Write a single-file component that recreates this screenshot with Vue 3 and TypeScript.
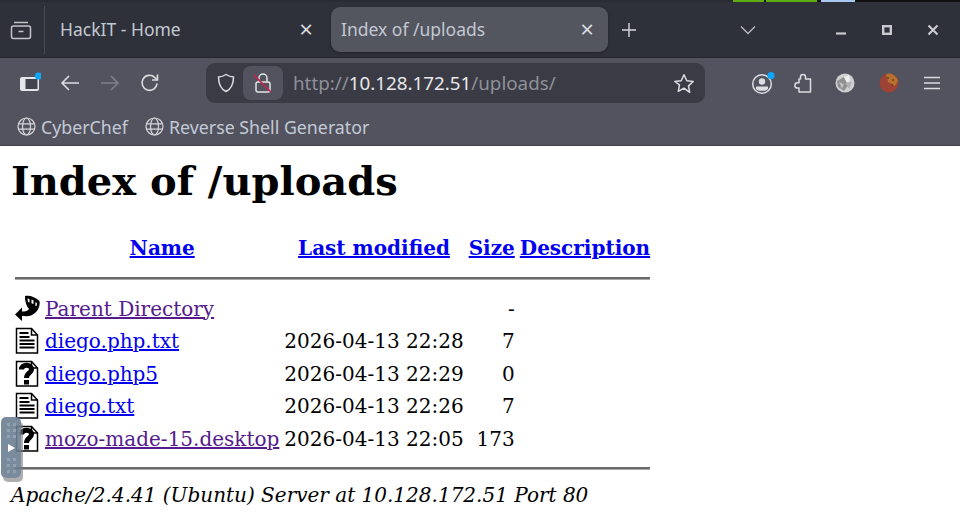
<script setup lang="ts">
interface Row { icon: string; name: string; visited?: boolean; date: string; size: string }
const rows: Row[] = [
  { icon: 'back', name: 'Parent Directory', visited: true, date: '', size: '-' },
  { icon: 'text', name: 'diego.php.txt', date: '2026-04-13 22:28', size: '7' },
  { icon: 'unknown', name: 'diego.php5', date: '2026-04-13 22:29', size: '0' },
  { icon: 'text', name: 'diego.txt', date: '2026-04-13 22:26', size: '7' },
  { icon: 'unknown', name: 'mozo-made-15.desktop', visited: true, date: '2026-04-13 22:05', size: '173' },
]
const strip = [
  { w: 31, c: '#5fae10' }, { w: 2, c: '#111' }, { w: 51, c: '#5fae10' }, { w: 4, c: '#111' },
  { w: 34, c: '#a9c8ef' }, { w: 40, c: '#111' },
]
</script>

<template>
  <div class="app">
    <div class="strip">
      <div class="strip-fill"></div>
      <span v-for="(s, i) in strip" :key="i" :style="{ width: s.w + 'px', background: s.c }"></span>
      <div class="strip-end"></div>
    </div>
    <div class="tabbar">
      <div class="tabview">
        <svg width="22" height="22" viewBox="0 0 22 22" fill="none" stroke="#c3c4ca" stroke-width="1.5">
          <rect x="1.5" y="7" width="19" height="12.5" rx="2"/>
          <path d="M4 3.500h14"/>
          <path d="M8.500 12.500h5"/>
        </svg>
      </div>
      <div class="tab inactive">
        <span class="tab-title">HackIT - Home</span>
        <span class="tab-close">×</span>
      </div>
      <div class="tab active">
        <span class="tab-title">Index of /uploads</span>
        <span class="tab-close">×</span>
      </div>
      <svg class="newtab" width="16" height="16" viewBox="0 0 16 16" stroke="#d6d7db" stroke-width="1.4"><path d="M8 1v14M1 8h14"/></svg>
      <svg class="tablist" width="16" height="10" viewBox="0 0 16 10" fill="none" stroke="#b5b6bd" stroke-width="1.4"><path d="M1 1.500l7 7 7-7"/></svg>
      <div class="winctl">
        <svg width="12" height="12" viewBox="0 0 12 12" stroke="#c9cacf" stroke-width="2.2"><path d="M1 9.500h10"/></svg>
        <svg width="12" height="12" viewBox="0 0 12 12" fill="none" stroke="#c9cacf" stroke-width="2.4"><rect x="2.2" y="2.2" width="7.6" height="7.6"/></svg>
        <svg width="12" height="12" viewBox="0 0 12 12" stroke="#c9cacf" stroke-width="2.2"><path d="M1.500 1.500l9 9M10.500 1.500l-9 9"/></svg>
      </div>
    </div>

    <div class="toolbar">
      <div class="sidebar-btn">
        <svg width="22" height="22" viewBox="0 0 22 22">
          <rect x="1" y="5" width="19" height="14" rx="2" fill="#e4e5e8"/>
          <rect x="6.500" y="7" width="12" height="10" rx=".5" fill="#42434d"/>
          <circle cx="19.500" cy="4" r="3.600" fill="#0ea5ff"/>
        </svg>
      </div>
      <svg class="nav" width="20" height="20" viewBox="0 0 20 20" fill="none" stroke="#dcdde0" stroke-width="1.6"><path d="M19 10H2M9 3l-7 7 7 7"/></svg>
      <svg class="nav" width="20" height="20" viewBox="0 0 20 20" fill="none" stroke="#7e7f88" stroke-width="1.6"><path d="M1 10h17M11 3l7 7-7 7"/></svg>
      <svg class="nav" width="20" height="20" viewBox="0 0 20 20" fill="none" stroke="#dcdde0" stroke-width="1.6"><path d="M17 10.500a7.500 7.500 0 1 1-2.400-6.200L17 6.500"/><path d="M17.500 1.500v5.500H12" /></svg>
      <div class="urlbar">
        <svg class="shield" width="18" height="20" viewBox="0 0 18 20" fill="none" stroke="#dcdde0" stroke-width="1.5"><path d="M9 1.500c2.400 1.600 4.800 2.300 7.500 2.400 0 6.600-1.600 11.600-7.500 14.600C3.100 15.500 1.500 10.500 1.500 3.900 4.200 3.800 6.600 3.100 9 1.500z"/></svg>
        <div class="lock">
          <svg width="20" height="22" viewBox="0 0 20 22" fill="none"><rect x="3" y="10" width="14" height="10" rx="2" stroke="#e4e5e8" stroke-width="1.5"/><path d="M6 10V6a4 4 0 0 1 8 0v4" stroke="#e4e5e8" stroke-width="1.5"/><path d="M1 3l17 17" stroke="#c9224f" stroke-width="1.6"/></svg>
        </div>
        <div class="url"><span class="dim">http://</span><span class="host">10.128.172.51</span><span class="dim">/uploads/</span></div>
        <svg class="star" width="22" height="21" viewBox="0 0 22 21" fill="none" stroke="#dcdde0" stroke-width="1.5" stroke-linejoin="round"><path d="M11 1.800l2.800 5.900 6.400.8-4.700 4.400 1.200 6.400L11 15.200l-5.700 3.100 1.200-6.400L1.800 8.500l6.400-.8z"/></svg>
      </div>
      <div class="right-icons">
        <svg class="ri-account" width="24" height="24" viewBox="0 0 24 24" fill="none">
          <circle cx="11" cy="13" r="9.300" stroke="#dcdde0" stroke-width="1.500"/>
          <circle cx="11" cy="10.500" r="3.200" fill="#dcdde0"/>
          <path d="M5 15.500h12v2.500l-2.500 1.800h-7L5 18z" fill="#dcdde0"/>
          <circle cx="20" cy="4.500" r="3.600" fill="#0ea5ff"/>
        </svg>
        <svg class="ri-puzzle" width="20" height="22" viewBox="0 0 20 22" fill="none" stroke="#dcdde0" stroke-width="1.500" stroke-linejoin="round"><path d="M10 2.500a2.500 2.500 0 0 1 2.500 2.500v2h5v13H6v-4H4.500a2.600 2.600 0 0 1 0-5.200H6V7h1.500V5A2.500 2.500 0 0 1 10 2.500z"/></svg>
        <svg class="ri-ext1" width="20" height="20" viewBox="0 0 20 20"><circle cx="10" cy="10" r="9.500" fill="#cfcfcf"/><path d="M2 8l7-4 5 7-5 7-6-4z" fill="#8f8f8f"/><path d="M9 4l5-2 1 5-3 3z" fill="#efefef"/><path d="M10 10l7-1-3 7z" fill="#b0b0b0"/><path d="M4 9l5 2-2 5z" fill="#bdbdbd"/></svg>
        <svg class="ri-ext2" width="20" height="20" viewBox="0 0 20 20"><circle cx="10" cy="10" r="9.500" fill="#9c4236"/><path d="M7 1a9.500 9.500 0 0 1 12 7l-3 5-7-4z" fill="#b8702e"/><circle cx="14" cy="7" r="1" fill="#6b3a22"/><circle cx="9" cy="5" r="1" fill="#6b3a22"/><circle cx="13" cy="12" r="1" fill="#7d3a2a"/></svg>
        <svg class="ri-menu" width="16" height="14" viewBox="0 0 16 14" stroke="#dcdde0" stroke-width="1.500"><path d="M0 1.500h16M0 7h16M0 12.500h16"/></svg>
      </div>
    </div>

    <div class="bookmarks">
      <div class="bm">
        <svg width="19" height="19" viewBox="0 0 19 19" fill="none" stroke="#d6d7db" stroke-width="1.200"><circle cx="9.500" cy="9.500" r="8.500"/><ellipse cx="9.500" cy="9.500" rx="4" ry="8.500"/><path d="M1.500 6.800h16M1.500 12.200h16"/></svg>
        <span>CyberChef</span>
      </div>
      <div class="bm">
        <svg width="19" height="19" viewBox="0 0 19 19" fill="none" stroke="#d6d7db" stroke-width="1.200"><circle cx="9.500" cy="9.500" r="8.500"/><ellipse cx="9.500" cy="9.500" rx="4" ry="8.500"/><path d="M1.500 6.800h16M1.500 12.200h16"/></svg>
        <span>Reverse Shell Generator</span>
      </div>
    </div>

    <main class="page">
      <h1>Index of /uploads</h1>
      <table>
        <thead>
          <tr>
            <th class="c-icon"><div class="blank"></div></th>
            <th><a href="#">Name</a></th>
            <th><a href="#">Last modified</a></th>
            <th><a href="#">Size</a></th>
            <th><a href="#">Description</a></th>
          </tr>
          <tr><th colspan="5" class="rule"><hr /></th></tr>
        </thead>
        <tbody>
          <tr v-for="r in rows" :key="r.name">
            <td class="c-icon">
              <svg v-if="r.icon === 'back'" width="25" height="27.500" viewBox="0 0 25 27.500">
                <path d="M10 1C15 0 20 2 24.500 6 25.500 12 22 18 16 20.500 13 21.500 10 21 7 21v5L0 19.500 7 12.500v4C10 16.500 13 16 14 14 11 11 10 6 10 1z" fill="#000"/>
                <path d="M12.500 3.500l2 .6v3.400l-1.500-.5zM16.500 4.500l2 1v3.500l-2-.8zM20.500 7l1.500 1.200-.5 3-1.200-.8z" fill="#fff"/>
              </svg>
              <svg v-else-if="r.icon === 'text'" width="25" height="27.500" viewBox="0 0 25 27.500" fill="none" stroke="#000">
                <path d="M1.500 1.500h15l6 6.500v18h-21z" fill="#fff" stroke-width="1.500"/>
                <path d="M16.500 1.500v6.500h6" stroke-width="1.500"/>
                <path d="M4.500 6h9M4.500 10h10M4.500 13.500h15M4.500 17h15M4.500 20.500h15" stroke-width="1.800"/>
              </svg>
              <svg v-else width="25" height="27.500" viewBox="0 0 25 27.500" fill="none" stroke="#000">
                <path d="M1.500 1.500h15l6 6.500v18h-21z" fill="#fff" stroke-width="1.500"/>
                <path d="M16.500 1.500v6.500h6" stroke-width="1.500"/>
                <path d="M6.500 9.500c0-5.500 10-6 10 0 0 3.500-5 3.500-5 8.500" stroke-width="5"/>
                <path d="M11.500 20v4.500" stroke-width="5"/>
              </svg>
            </td>
            <td><a href="#" :class="{ visited: r.visited }">{{ r.name }}</a></td>
            <td class="date">{{ r.date }}</td>
            <td class="size">{{ r.size }}</td>
            <td></td>
          </tr>
          <tr><th colspan="5" class="rule"><hr /></th></tr>
        </tbody>
      </table>
      <address>Apache/2.4.41 (Ubuntu) Server at 10.128.172.51 Port 80</address>
    </main>

    <div class="handle">
      <div class="dots"><i v-for="n in 6" :key="'a' + n"></i></div>
      <svg width="9" height="10" viewBox="0 0 9 10"><path d="M1 1l7 4-7 4z" fill="#fff"/></svg>
      <div class="dots"><i v-for="n in 6" :key="'b' + n"></i></div>
    </div>
  </div>
</template>

<style>
html, body { margin: 0; background: #fff; }
</style>

<style scoped>
.app {
  position: relative;
  width: 960px;
  height: 527px;
  overflow: hidden;
  background: #fff;
  font-family: "Noto Sans", "Open Sans", sans-serif;
}
.strip { display: flex; height: 2px; background: #2a2c33; }
.strip-fill { flex: 0 0 733px; }
.strip-end { flex: 1; background: #111; }

.tabbar {
  height: 56px;
  display: flex;
  align-items: center;
  background: #2f313a;
  border-bottom: 1px solid #25262d;
  box-sizing: border-box;
  padding-right: 21px;
}
.tabview {
  width: 45px;
  height: 48px;
  box-sizing: border-box;
  padding-left: 10px;
  display: flex;
  align-items: center;
  border-right: 1px solid #4a4b55;
}
.tab {
  height: 45px;
  box-sizing: border-box;
  display: flex;
  align-items: center;
  justify-content: space-between;
  font-size: 17.500px;
  color: #c2c8d2;
  padding-left: 15px;
  padding-right: 18px;
  border-radius: 9px;
  margin-top: -1px;
}
.tab.inactive { width: 286px; }
.tab.active { width: 277px; background: #53555f; padding-left: 10px; padding-right: 14px; box-shadow: 0 1px 3px rgba(0, 0, 0, .3); }
.tab-close { font-size: 24px; line-height: 1; color: #d9dade; }
.newtab { margin-left: 13px; }
.tablist { margin-left: 103px; }
.winctl { display: flex; gap: 34px; margin-left: auto; }

.toolbar {
  height: 50px;
  display: flex;
  align-items: center;
  background: #52535f;
  padding-left: 19px;
  box-sizing: border-box;
}
.sidebar-btn { width: 22px; height: 22px; margin-right: 19px; }
.nav { margin-right: 20px; flex: none; }
.urlbar {
  margin-left: 26px;
  width: 499px;
  height: 40px;
  background: #3a3b45;
  border-radius: 9px;
  display: flex;
  align-items: center;
  box-sizing: border-box;
  padding-left: 11px;
  flex: none;
}
.lock {
  margin-left: 8px;
  width: 40px;
  height: 34px;
  background: #52535f;
  border-radius: 8px;
  display: flex;
  align-items: center;
  justify-content: center;
}
.url { margin-left: 10px; font-size: 18.800px; flex: 1; white-space: nowrap; }
.dim { color: #8f9098; }
.host { color: #e6e7ea; }
.star { margin-right: 10px; }
.right-icons {
  margin-left: 46px;
  display: flex;
  align-items: center;
}
.ri-puzzle { margin-left: 18px; }
.ri-ext1 { margin-left: 22px; }
.ri-ext2 { margin-left: 24px; }
.ri-menu { margin-left: 25px; }
.bookmarks {
  height: 38px;
  display: flex;
  align-items: center;
  gap: 17px;
  padding-left: 17px;
  background: #52535f;
  box-sizing: border-box;
  border-bottom: 1px solid #3e3f48;
  color: #c3cad6;
  font-size: 17.800px;
}
.bm { display: flex; align-items: center; gap: 5px; }

.page {
  padding: 0 11px;
  font-family: "DejaVu Serif", serif;
  font-size: 20px;
  color: #000;
}
h1 {
  margin: 10.500px 0 26.800px;
  font-size: 40px;
  line-height: 47px;
  font-weight: 700;
}
table { border-spacing: 3px; border-collapse: separate; }
th { font-weight: 700; padding: 1px; text-align: center; }
td { padding: 1px; white-space: nowrap; }
.c-icon { padding: 1px; width: 25px; }
.c-icon svg, .blank { display: block; width: 25px; height: 27.500px; }
a { color: #0000ee; }
a.visited { color: #551a8b; }
.date { text-align: left; }
.size { text-align: right; }
hr { margin: 10px 0; border: 0; border-top: 2px solid #6a6a6a; border-bottom: 1px solid #a8a8a8; height: 0; }
address { font-style: italic; margin-top: 0; line-height: 23px; }

.handle {
  position: absolute;
  left: 1px;
  top: 417px;
  width: 20px;
  height: 61px;
  border-radius: 5px;
  background: rgba(108, 126, 148, .9);
  box-shadow: 2px 4px 0 rgba(120, 120, 120, .6);
  display: flex;
  flex-direction: column;
  align-items: center;
  justify-content: center;
  gap: 5px;
}
.dots { display: grid; grid-template-columns: 3px 3px; gap: 3px 3px; }
.dots i { width: 3px; height: 3px; background: #93a1b1; }
</style>
